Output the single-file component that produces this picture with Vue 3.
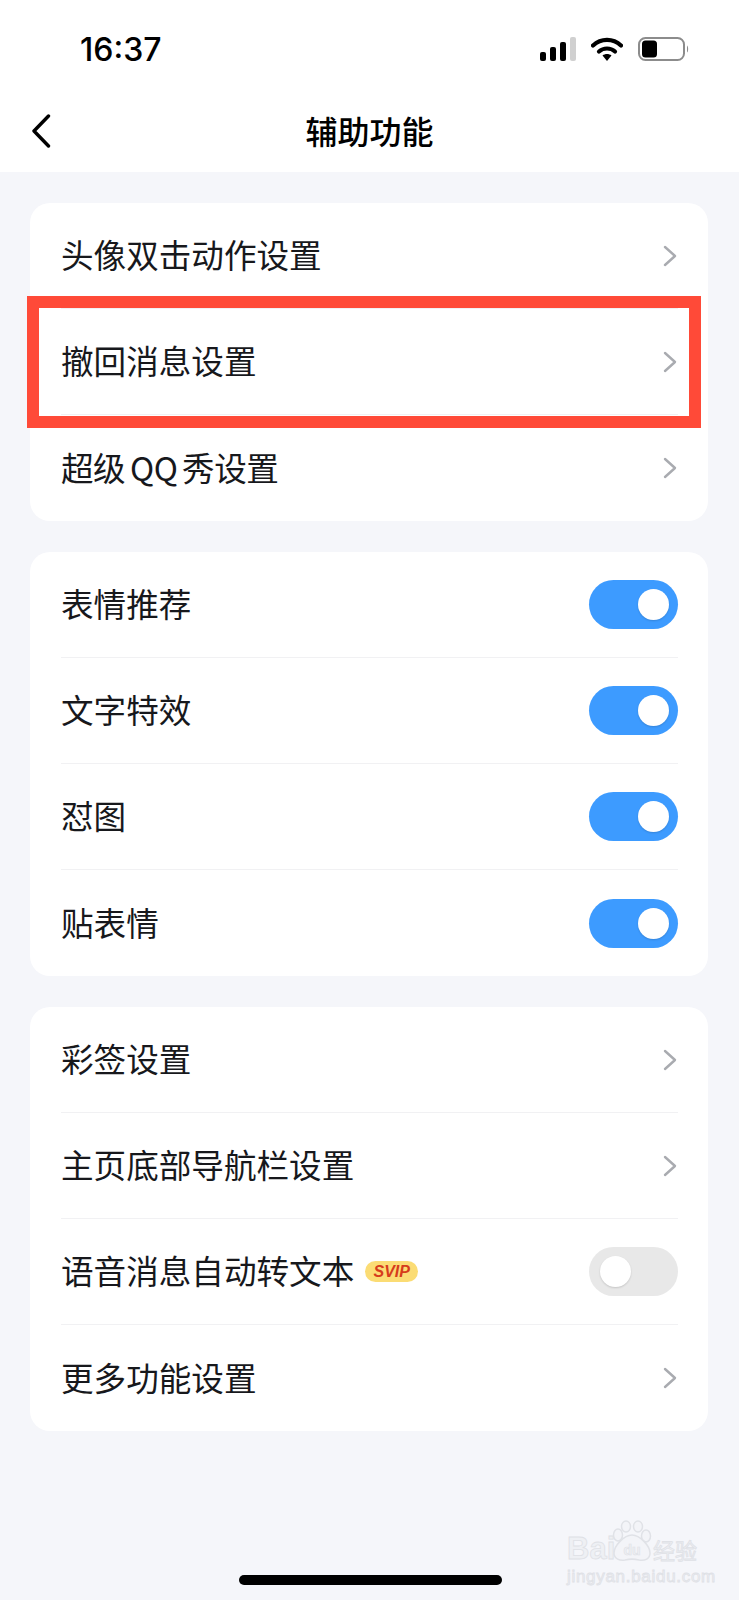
<template>
  <div class="page">
    <header class="top">
      <div class="status">
        <span class="time">16:37</span>
        <div class="status-icons">
          <svg class="signal" width="36" height="24" viewBox="0 0 36 24">
            <rect x="0" y="15" width="6" height="9" rx="2" fill="#000" />
            <rect x="10" y="10" width="6" height="14" rx="2" fill="#000" />
            <rect x="20" y="5" width="6" height="19" rx="2" fill="#000" />
            <rect x="30" y="0" width="6" height="24" rx="2" fill="#d0d0d0" />
          </svg>
          <svg class="wifi" width="32" height="24" viewBox="0 0 32 24">
            <path d="M2 8.500C10 1 22 1 30 8.500" fill="none" stroke="#000" stroke-width="4.200" stroke-linecap="round" />
            <path d="M8 14.500C12.500 10.500 19.500 10.500 24 14.500" fill="none" stroke="#000" stroke-width="4.200" stroke-linecap="round" />
            <path d="M11.500 18.500C14 16.500 18 16.500 20.500 18.500L16 24Z" fill="#000" />
          </svg>
          <svg class="battery" width="51" height="24" viewBox="0 0 51 24">
            <rect x="1" y="1" width="45" height="22" rx="6.500" fill="#fff" stroke="#8c8c8c" stroke-width="2" />
            <rect x="4" y="3.500" width="15" height="17" rx="3.500" fill="#000" />
            <path d="M49 8.500C50.500 9.500 50.500 14.500 49 15.500Z" fill="#8c8c8c" />
          </svg>
        </div>
      </div>
      <nav class="nav">
        <svg class="back" width="20" height="34" viewBox="0 0 20 34">
          <path d="M17.500 2L3 17L17.500 32" fill="none" stroke="#000" stroke-width="3.400" stroke-linecap="round" stroke-linejoin="round" />
        </svg>
        <h1 class="title">辅助功能</h1>
      </nav>
    </header>

    <main class="content">
      <section v-for="(group, i) in groups" :key="i" class="card">
        <div v-for="item in group" :key="item.label" class="row">
          <div class="label" :class="{ tight: item.tight }">
            <span>{{ item.label }}</span>
            <span v-if="item.svip" class="svip">SVIP</span>
          </div>
          <span v-if="item.toggle !== undefined" class="toggle" :class="{ on: item.toggle }">
            <span class="knob"></span>
          </span>
          <svg v-else class="chevron" width="14" height="22" viewBox="0 0 14 22">
            <path d="M2 2L12 11L2 20" fill="none" stroke="#a9abb0" stroke-width="2.400" stroke-linecap="round" stroke-linejoin="round" />
          </svg>
        </div>
      </section>
    </main>

    <!-- red annotation box drawn over the second row -->
    <div class="highlight"></div>

    <div class="watermark">
      <div class="wm-logo">
        <span class="wm-bai">Bai</span>
        <svg class="paw" width="40" height="42" viewBox="0 0 40 42">
          <g fill="#f3f4f8" stroke="#e0e2e7" stroke-width="1.500">
            <ellipse cx="6" cy="15" rx="4.500" ry="6" />
            <ellipse cx="14" cy="6.500" rx="4.500" ry="5.500" />
            <ellipse cx="26" cy="6.500" rx="4.500" ry="5.500" />
            <ellipse cx="34" cy="16" rx="4.500" ry="6" />
            <path d="M20 15C12 15 2 26 2 33C2 39 8 41 13 40C17 39 23 39 27 40C33 41 38 39 38 33C38 26 28 15 20 15Z" />
          </g>
          <text x="20" y="35" text-anchor="middle" class="wm-du">du</text>
        </svg>
        <span class="wm-cn">经验</span>
      </div>
      <div class="wm-url">jingyan.baidu.com</div>
    </div>

    <div class="home-bar"></div>
  </div>
</template>

<script setup>
const groups = [
  [{ label: '头像双击动作设置' }, { label: '撤回消息设置' }, { label: '超级 QQ 秀设置', tight: true }],
  [
    { label: '表情推荐', toggle: true },
    { label: '文字特效', toggle: true },
    { label: '怼图', toggle: true },
    { label: '贴表情', toggle: true },
  ],
  [
    { label: '彩签设置' },
    { label: '主页底部导航栏设置' },
    { label: '语音消息自动转文本', toggle: false, svip: true },
    { label: '更多功能设置' },
  ],
]
</script>

<style>
html,
body {
  margin: 0;
  background: #f5f6fa;
}
</style>

<style scoped>
.page {
  position: relative;
  width: 739px;
  height: 1600px;
  overflow: hidden;
  background: #f5f6fa;
  color: #17181c;
  font-family: 'Noto Sans CJK SC', 'Liberation Sans', sans-serif;
}

.top {
  height: 172px;
  background: #fff;
}

.status {
  height: 98px;
  padding: 0 50px 0 80px;
  display: flex;
  align-items: center;
  justify-content: space-between;
  box-sizing: border-box;
}

.time {
  font-family: 'Inter', 'Liberation Sans', sans-serif;
  font-size: 32px;
  font-weight: 500;
  color: #000;
}

.status-icons {
  display: flex;
  align-items: center;
  gap: 15px;
}

.nav {
  position: relative;
  height: 66px;
  display: flex;
  align-items: center;
  justify-content: center;
}

.back {
  position: absolute;
  left: 31px;
  top: 16px;
}

.title {
  margin: 0 0 2px;
  font-size: 32px;
  font-weight: 500;
  color: #000;
  line-height: 44px;
}

.content {
  padding: 31px 31px 0 30px;
  display: flex;
  flex-direction: column;
  gap: 31px;
}

.card {
  background: #fff;
  border-radius: 20px;
  padding: 0 30px 0 31px;
}

.row {
  height: 106px;
  display: flex;
  align-items: center;
  justify-content: space-between;
  box-sizing: border-box;
  border-bottom: 1px solid #f1f1f3;
}

.row:last-child {
  border-bottom: 0;
}

.label {
  display: flex;
  align-items: center;
  padding-bottom: 3px;
  font-size: 32.6px;
  line-height: 44px;
}

.label.tight {
  letter-spacing: -0.5px;
  word-spacing: -2px;
}

.svip {
  margin: 3px 0 0 11px;
  width: 53px;
  height: 21px;
  border-radius: 11px;
  background: #fbdc74;
  color: #d63c1c;
  font-family: 'Liberation Sans', sans-serif;
  font-size: 16px;
  font-style: italic;
  font-weight: 700;
  line-height: 21px;
  text-align: center;
}

.chevron {
  margin-right: 1px;
}

.toggle {
  position: relative;
  width: 89px;
  height: 49px;
  border-radius: 25px;
  background: #e8e8e8;
}

.toggle.on {
  background: #3d9bff;
}

.knob {
  position: absolute;
  top: 9px;
  left: 11px;
  width: 31px;
  height: 31px;
  border-radius: 50%;
  background: #fff;
  box-shadow: 0 1px 2px rgba(0, 0, 0, 0.15);
}

.toggle.on .knob {
  left: 49px;
}

.highlight {
  position: absolute;
  left: 27px;
  top: 296px;
  width: 674px;
  height: 132px;
  border: 12px solid #ff4a38;
  box-sizing: border-box;
}

.watermark {
  position: absolute;
  left: 567px;
  top: 1520px;
  width: 134px;
  color: #eef0f4;
  -webkit-text-stroke: 0.8px #dfe1e6;
}

.wm-logo {
  display: flex;
  align-items: flex-end;
  height: 44px;
}

.wm-bai {
  font-family: 'Liberation Sans', sans-serif;
  font-size: 31px;
  font-weight: 700;
  line-height: 30px;
  width: 45px;
  flex: none;
}

.paw {
  flex: none;
  margin-bottom: 2px;
}

.wm-cn {
  font-size: 22px;
  line-height: 30px;
  white-space: nowrap;
  margin-left: 1px;
}

.wm-du {
  font-family: 'Liberation Sans', sans-serif;
  font-size: 14px;
  font-weight: 700;
  fill: #eef0f4;
  stroke: #dfe1e6;
  stroke-width: 0.6px;
}

.wm-url {
  margin-top: 3px;
  font-family: 'Liberation Sans', sans-serif;
  font-size: 17px;
  line-height: 20px;
  letter-spacing: 0.7px;
  white-space: nowrap;
}

.home-bar {
  position: absolute;
  left: 239px;
  top: 1575px;
  width: 263px;
  height: 10px;
  border-radius: 5px;
  background: #000;
}
</style>
